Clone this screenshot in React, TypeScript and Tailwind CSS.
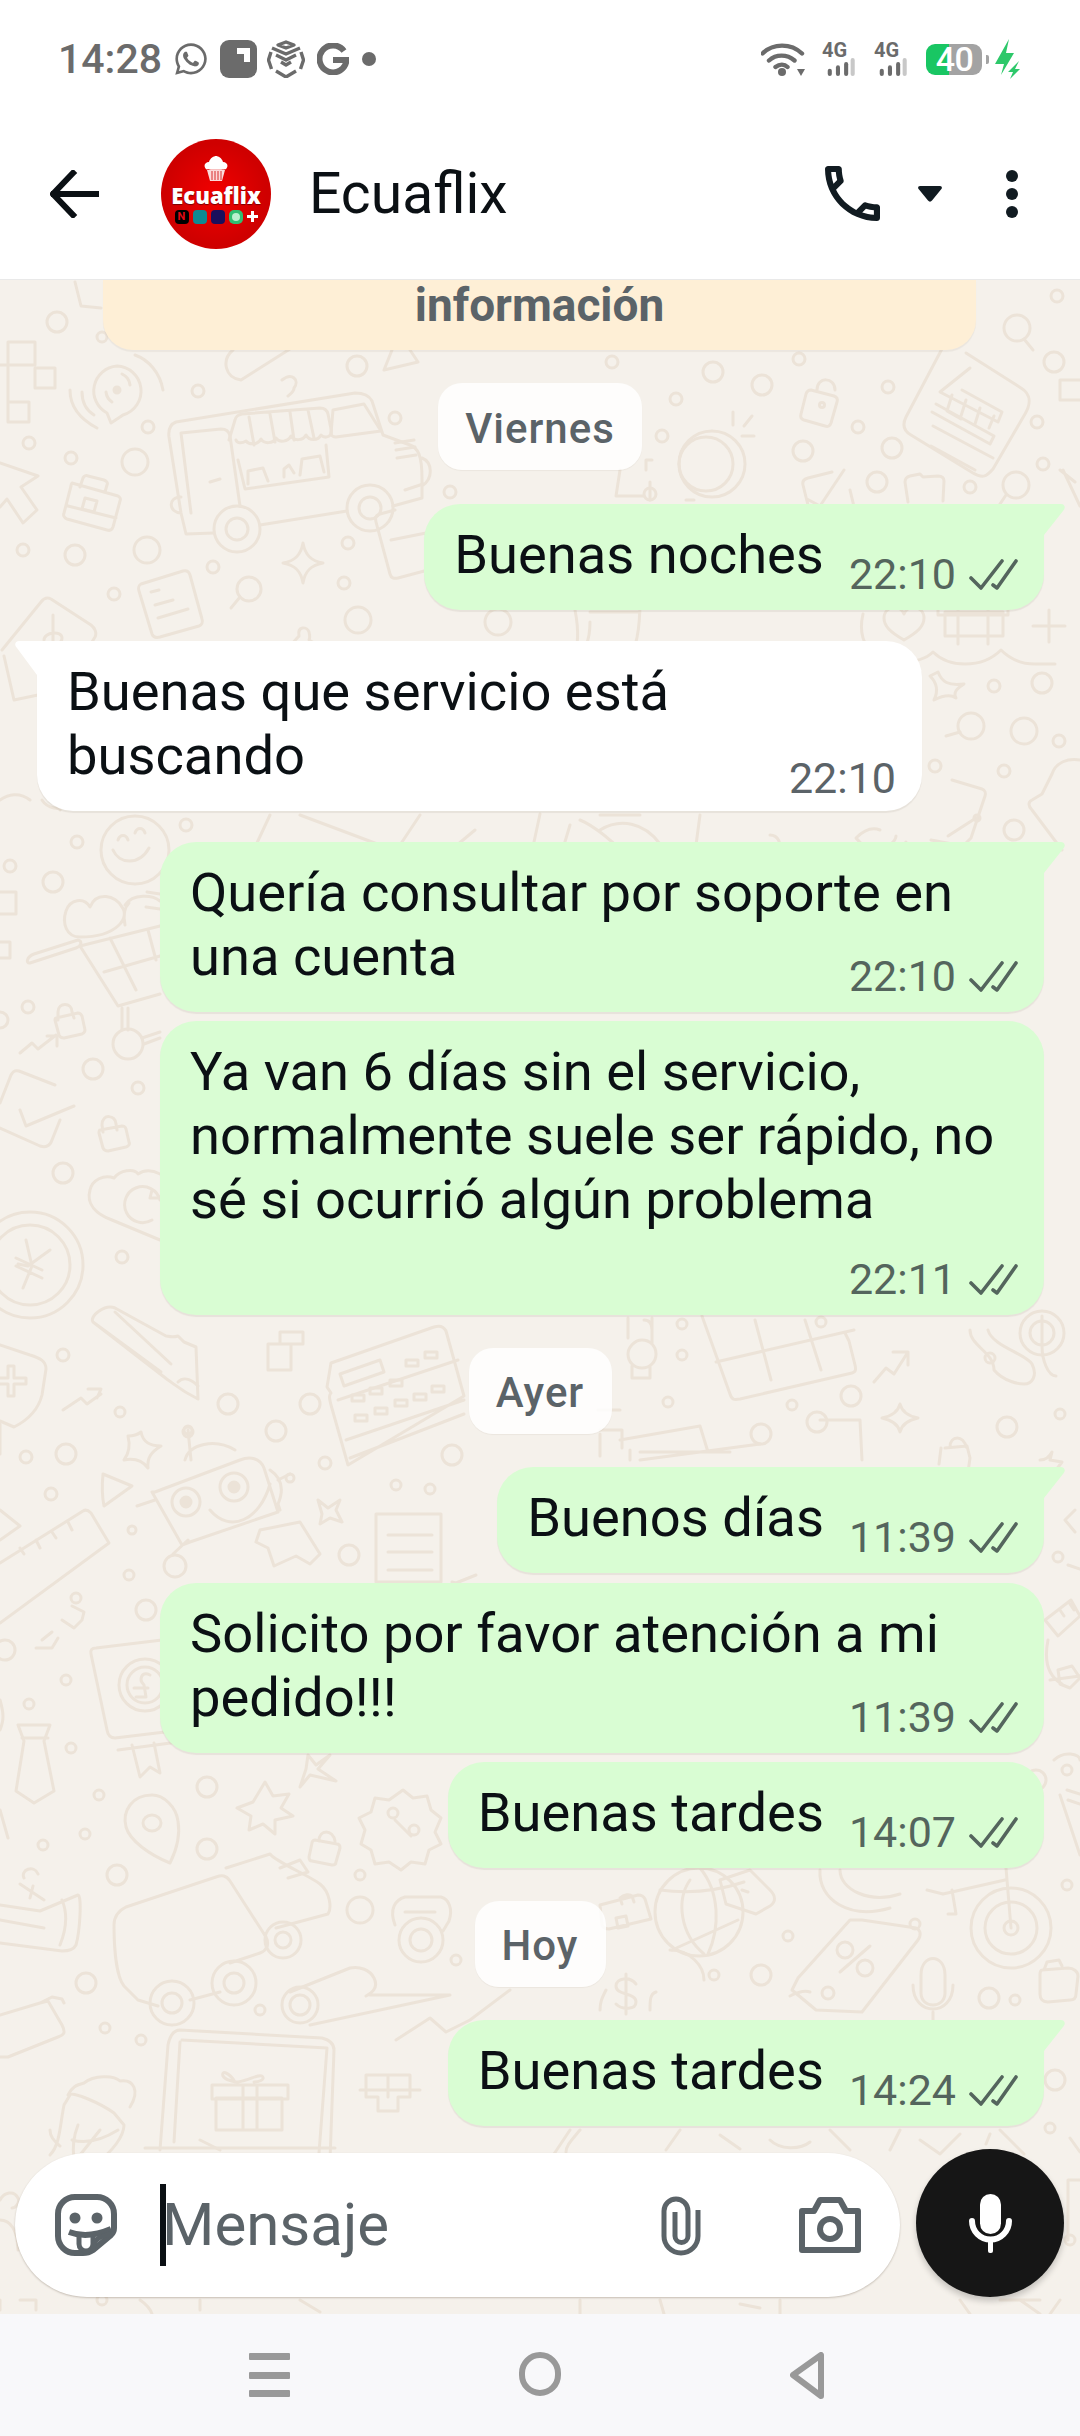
import React from "react";
import { FaWhatsapp } from "react-icons/fa";

const C = ({ x, y, r }: { x: number; y: number; r: number }) => <circle cx={x} cy={y} r={r} />;

const circles: [number, number, number][] = [
  [57,322,10],[102,337,5],[198,391,6],[357,366,10],[148,427,6],[29,443,6],[71,458,6],[135,462,13],[23,550,6],[75,555,10],[147,550,13],[213,567,6],[348,543,6],[344,583,6],[395,418,6],[450,492,6],[114,594,6],[358,620,13],[498,622,13],[77,842,6],[186,825,6],[10,866,6],
  [1057,296,6],[612,362,6],[713,372,10],[799,359,6],[762,385,10],[676,399,6],[888,387,6],[1054,362,10],[1037,422,6],[858,427,6],[662,436,6],[803,451,10],[892,448,10],[1043,464,6],[877,482,10],[970,487,6],[650,494,6],[994,686,6],[1042,683,10],[1024,731,13],[1059,741,6],[935,766,6],[1004,771,6],[1014,830,10],
  [53,882,10],[28,1007,6],[93,1069,10],[138,1088,6],[63,1173,10],[122,1257,6],
  [63,1355,6],[120,1412,5],[228,1404,10],[310,1404,10],[276,1431,10],[26,1457,6],[66,1454,10],[188,1432,5],[325,1463,6],[51,1494,6],[452,1455,10],[396,1485,5],[430,1489,5],[349,1555,10],[129,1575,5],[76,1598,5],[146,1610,10],[5,1650,10],[66,1680,5],[29,1704,5],[71,1748,5],[207,1787,10],[99,1795,5],[85,1834,5],[43,1845,5],[207,1849,10],[117,1875,10],[360,1875,5],[360,1910,13],[456,1960,5],[86,1983,10],[105,2028,5],[141,2040,5],[260,2010,5],
  [682,1324,5],[682,1355,5],[821,1322,5],[990,1358,5],[851,1396,10],[792,1405,5],[668,1402,5],[761,1434,10],[817,1422,10],[1007,1427,10],[1060,1414,5],[1058,1557,5],[1036,1780,10],[1067,1770,5],[1067,1885,5],[915,1924,5],[788,1936,5],[714,1975,5],[761,1975,10],[989,1998,10],[1015,2000,5],[1055,2080,10],[1050,2128,5],
];

function Wallpaper() {
  return (
    <svg className="absolute inset-0" width="1080" height="2034" viewBox="0 280 1080 2034" fill="none" stroke="#ece3d8" strokeWidth="3" strokeLinecap="round" strokeLinejoin="round">
      {circles.map(([x, y, r], i) => <C key={i} x={x} y={y} r={r} />)}
      <path d="M8 342h27v23h-27zM35 368h20v20h-20zM8 402h21v20h-21zM0 365h8v37M75 282l6 24 20 2" />
      <path d="M117 366a25 25 0 0 1 6 49l-12 8-4-10a25 25 0 0 1 10-47zM106 392a14 14 0 0 0 6 10M130 385a14 14 0 0 0-8-11M70 390c0 16 8 28 27 38M82 392c0 10 4 18 12 23M135 355c14 5 25 18 28 35" />
      <circle cx="117" cy="390" r="3" fill="#ece3d8" />
      <path d="M233 350c-12 10-8 28 8 30l60-38M282 380c10-8 18 0 12 8 0 4-4 6-6 8M392 350l-8 20 34-8-8-12" />
      <path d="M176 422L355 393c8 0 14 2 17 8l11 34 27 10c8 3 12 10 12 34v19l-29 8M347 511L260 525M214 533l-28 1-5-21-12-76c-1-8 2-13 7-15M422 458c10 4 12 20 0 28M181 513c-12 0-14-16 0-16" />
      <path d="M181 433l40-4c5 0 8 2 9 7l10 70M191 513l-10-80M210 482l10-3" />
      <path d="M229 440l6-20c1-4 3-5 7-6l78-6c4 0 7 2 8 6l3 15c2 8-6 10-10 6-3 6-12 6-15 0-3 6-12 6-15 1-3 6-12 7-15 2-3 6-12 6-15 1-3 6-12 6-15 2-5 3-9 2-10-1M249 417l5 28M270 414l5 28M290 412l4 28M308 410l6 28" />
      <path d="M333 410l31-6 17 27-45 6c-3 0-5-2-5-4zM238 460l7 29 84-12-3-32M248 484v-13l15-3 5 13M284 477v-8l5-4 5 8M300 475l2-16 18-3 4 16M395 443l19-3M396 450l19-3M397 458l19-3" />
      <circle cx="237" cy="529" r="23" /><circle cx="237" cy="529" r="11" /><circle cx="370" cy="508" r="23" /><circle cx="370" cy="508" r="11" />
      <path d="M0 463l38 13-17 11 16 23-14 13-16-24-7 8" />
      <path d="M72 483l46 13c2 1 3 3 2 5l-7 26c-1 3-3 4-6 3l-40-11c-3-1-4-4-3-6l7-27c0-2 1-3 1-3zM80 487l3-9c1-2 3-3 5-2l16 4c3 1 4 3 3 5l-2 7M68 506l48 12M85 498l12 3-3 11-12-3z" />
      <path d="M141 584l42-13c4-1 6 1 7 4l12 44c1 3 0 6-3 7l-39 11c-4 1-7 0-8-3l-13-43c-1-3 0-6 2-7zM151 592l8-2M155 605l18-5M158 618l30-9" />
      <path d="M303 543c2 12 8 18 20 20-12 2-18 8-20 20-2-12-8-18-20-20 12-2 18-8 20-20z" />
      <circle cx="249" cy="589" r="12" /><path d="M240 597l-9 11" />
      <path d="M290 646l9-10c-2-10 8-10 10-4 1 4 1 6 0 8l10 6-10 12-10 8" />
      <path d="M395 510l-15 4c-4 1-5 4-4 8l14 52c1 4 4 5 8 4l30-8M405 490l18-6M391 540l40-8" />
      <path d="M2 650l39-48c3-4 6-5 10-3l40 26c4 3 6 8 4 12l-6 10M4 656l10 44 24-5M53 615v40M44 640c0-8 18-10 18-2 0 10-18 6-18 16 0 8 18 6 18-2" />
      <path d="M42 800c5 8 18 12 26 4M40 780l20 30" />
      <circle cx="712" cy="464" r="33" /><circle cx="706" cy="464" r="27" /><path d="M733 412v13M752 416l-8 10M754 436h-12" />
      <path d="M646 470v-10h6M620 470l-4 26h28M694 500h-8M650 500v-18" />
      <path d="M811 390l23 6c3 1 4 3 3 6l-6 21c-1 3-3 4-6 3l-21-6c-3-1-4-3-3-6l5-20c1-3 3-4 5-4zM817 390c0-14 18-13 18 0" /><circle cx="822" cy="405" r="2.5" />
      <path d="M944 345l-38 72c-4 8-2 14 5 18l62 38c10 6 14 3 20-4l32-55c6-10 6-20-4-26l-55-35" />
      <path d="M970 368l-30 24 58 30 4-10-40-22M952 395l-5 16 14 8M966 400l-5 16M980 408l-5 16M994 416l-5 12M936 404l58 32-4 8-58-32M933 426l60 32M931 446l44 24" />
      <circle cx="1017" cy="328" r="13" /><path d="M1024 339l9 11" /><circle cx="1016" cy="485" r="13" /><path d="M1006 495l-8 12" />
      <path d="M1060 470l15 12M1063 470l17 36M1060 380h20M1060 380v20h20" />
      <path d="M832 472l-24 6c-4 1-6 3-5 7l8 32M844 470l-24 36-13-7M850 490l6 25" />
      <path d="M910 476l10-2 3 3 15-1c4 0 6 2 6 5l-1 20M910 476c-4 1-5 3-5 6l3 20" />
      <path d="M904 640c-14-8-20-14-20-22 0-12 16-14 20-4 4-10 20-8 20 4 0 8-6 14-20 22zM863 614c-6 26 6 48 38 48 14 0 26-4 32-10 6 6 16 12 32 12 20 0 30-8 36-14 6 6 16 14 34 14h20M938 615h70v-15c0-10-70-10-70 5v10zM958 600v44M988 600v44M945 612h58v24h-58zM1049 610v32M1033 626h32" />
      <path d="M590 622c0 20-6 30-14 40M640 600c0 30-4 50-12 60M575 610c4 20 4 36-2 52M590 612h50" />
      <path d="M938 672c4 10 10 14 26 12-10 6-10 10-8 14-6-4-14-2-22 2 4-8 4-16-4-24z" />
      <circle cx="971" cy="726" r="13" /><path d="M960 732l-14 4" />
      <path d="M952 780l30 9c3 1 4 4 3 7l-14 42-8 8-32-6M948 836l28-18" /><circle cx="977" cy="818" r="3" />
      <path d="M1080 760c-12-2-24 2-28 14l-10 20-10 6c-4 2-4 6 0 10l30 40" />
      <path d="M880 830c-10-4-18 2-24 8 6 8 16 14 22 12 8-2 18-8 18-14M890 850c10 0 14-4 16-8" />
      <path d="M770 835c8 0 12 8 10 20M580 820c10 4 40 24 46 40M570 825l-12 40" />
      <path d="M0 800c8-6 20-8 30 0M270 815l-14 30M300 815l80 30M420 815l-20 30M540 814l-6 28M475 830l-30 25M600 830c20-12 44-8 60 14M640 815h-40M700 815l-4 30" />
      <circle cx="135" cy="850" r="34" /><path d="M113 850c6 14 26 16 36-2M118 840c2-6 8-6 10 0M135 833c2-6 8-6 10 0" />
      <path d="M80 937c-14 0-18-14-14-26 4-12 18-14 24-4 6-16 26-12 32 0 8 10-4 30-42 30zM125 905c8-12 28-10 35-4M125 925c-2-10 0-18 4-22M147 892l13 2M146 907l14 2" />
      <path d="M30 963l46-15c6-2 6-7 2-8l-44 14c-8 3-8 10-4 9zM80 946l80-20M80 946l38 60 42-12M110 938l26 52M104 972l56-16M148 930l8 30M122 1008v22M128 1008v22" />
      <circle cx="128" cy="1044" r="15" /><path d="M142 1038l18-6M144 1044l16-6" />
      <path d="M58 1020v-8c0-10 14-10 14 0l2 6M56 1018l22-5c2 0 3 1 4 3l3 14c0 2-1 3-3 4l-18 4c-2 0-4 0-5-3l-4-15c0-1 0-2 1-2zM103 1132l-1-7c0-12 14-10 14-1l1 6M100 1130l22-4c2 0 3 0 4 3l3 13c1 2 0 4-3 5l-18 4c-3 0-4-1-5-3l-4-15c0-2 0-3 1-3z" />
      <path d="M20 1053l12-10 6 6 18-14M47 1036h10v10" />
      <path d="M55 1085l-36-14c-4-1-6 0-8 4l-11 28M20 1110l6 16 48-20M60 1120l-8 20c-2 6-6 8-12 6l-40-18" />
      <path d="M160 1240l-48-20c-16-6-26-16-22-30 2-10 14-16 24-12 6-8 20-10 24-4 6-4 14-4 22 0" /><path d="M160 1200a18 18 0 1 0 -8 20M152 1190l-2 8 10 0" />
      <circle cx="30" cy="1265" r="53" /><circle cx="30" cy="1265" r="40" /><path d="M26 1240l6 26-9 22M50 1250l-22 16-10-2M16 1258l26 12M16 1266l26 12" />
      <circle cx="0" cy="1020" r="8" /><path d="M0 892h16v22H0M0 942h10v16H0" />
      <path d="M93 1322l75 58c6 4 12 10 30 19l-2-52-12-5-6-6c-6 2-10 0-12 0L115 1308c-10-4-26 8-22 14zM115 1312l56 52M93 1322l68 50M178 1382c6-6 14-2 20 4" />
      <path d="M0 1345l30 10c10 3 16 6 16 14l-4 26c-4 16-16 26-28 32l-14-6M-2 1378h10v-12h6v12h12v6H14v12H8v-12H0" />
      <path d="M63 1410l18-12 6 6 14-10M88 1389h13l-4 9" />
      <path d="M268 1370h23v-26h12v-12h-23v12h-12zM280 1344h11" />
      <path d="M331 1363l103-36c6-2 10 0 12 4l18 65-116 69-17-60c-2-8-2-10 0-12l-4-6zM340 1374l40-14 4 12-40 14zM338 1400l120-40M350 1458l114-44M346 1440l118-40" />
      <path d="M352 1395h12v6h-12zM370 1388h12v6h-12zM390 1380h12v6h-12zM406 1360h12v6h-12zM425 1352h12v6h-12zM355 1415h12v6h-12zM375 1408h12v6h-12zM395 1400h12v6h-12zM414 1394h12v6h-12zM432 1386h12v6h-12z" />
      <path d="M185 1460c4-16 30-22 50-10M155 1492l85-32c10-4 20-2 24 8l14 44-88 30-8 3-30-53zM188 1540l-15 14M155 1500l-18 6M188 1430l3 30M270 1470c12 8 14 20 8 34l2 6M278 1480l12-6M210 1510c20 24 50 10 60-26" />
      <circle cx="186" cy="1502" r="14" /><circle cx="234" cy="1487" r="14" /><circle cx="186" cy="1502" r="5" fill="#ece3d8" /><circle cx="234" cy="1487" r="5" fill="#ece3d8" />
      <circle cx="175" cy="1566" r="11" /><circle cx="290" cy="1478" r="4" /><circle cx="132" cy="1530" r="4" /><circle cx="188" cy="1430" r="4" />
      <path d="M141 1432c2 10 8 14 20 14-10 6-14 12-13 22-6-8-14-10-24-8 6-8 6-16 4-24 4 0 8 0 13-4zM103 1474l29 12-28 20c-2-10-2-22-1-32z" />
      <path d="M260 1530l40-8 20 32-10 10-14-8-22 10-6-18-12-6zM318 1500l10 8 12-8-4 10 6 12-12-4-10 6 2-10z" />
      <path d="M0 1563l83-52c3-2 6 0 8 2l18 30-109 80M20 1548l4 6M36 1540l4 8M52 1532l4 6M68 1522l4 8" />
      <path d="M0 1510l20 16-20 14M376 1514h65v68h-65zM388 1535h44M388 1552h44M388 1570h44M0 1424v30" />
      <path d="M476 1575l-20 8-4-1M458 1650h8" />
      <path d="M62 1620l12 8 8-8 2-8-12-6M42 1640l10-8M36 1648h16l6-10" />
      <path d="M162 1640l-66 8c-4 0-6 2-5 6l16 76c1 6 4 8 8 8l50-6" /><circle cx="145" cy="1685" r="18" /><circle cx="145" cy="1685" r="26" /><path d="M150 1675c-8-4-12 4-6 10l2 12h-10M134 1688h14M118 1750l60-8M132 1745l8 32 10-10 10 6-6-30" />
      <path d="M18 1725h32l-6 16 10 50-20 12-18-12 8-50z" /><path d="M22 1738h26" />
      <path d="M0 1700c4 14 4 20 0 30M0 1810l8 28" />
      <path d="M152 1795c-20 0-30 16-26 32 4 14 24 28 44 36 8-16 10-30 8-42-2-14-14-26-26-26z" /><ellipse cx="152" cy="1823" rx="9" ry="8" />
      <path d="M265 1782l8 14 16-2-8 14 12 8-18 4 0 14-12-10-14 6 2-14-14-8 16-6z" />
      <path d="M403 1790l10 8 14-2 4 14 10 8-6 14 6 12-12 6-4 14-14-2-10 8-12-8-14 2-4-14-10-6 4-14-6-12 12-6 4-14 14 2zM395 1820l16 16" /><circle cx="393" cy="1813" r="5" /><circle cx="414" cy="1830" r="5" />
      <path d="M315 1840l22 4c2 0 3 2 3 4l-4 14c0 2-2 3-4 3l-20-4c-2 0-3-2-3-4l3-14c0-2 2-3 3-3zM319 1841c0-12 14-12 16 0" />
      <path d="M308 1755l8 10 14-10-12 14 18 12-26-6-10 12 6-18z" />
      <path d="M0 1905l40 6 38-16c4 0 2 36-2 50-2 4-8 6-14 6l-62-8M20 1884l24 16M24 1878c-4-8 10-14 14-4M33 1886l-3 12M0 1920l44 8M62 1900c6 14 4 30-2 45" />
      <path d="M114 1925c0-8 4-14 12-18l90-30c6-2 10-2 14 4l36 56c4 8 0 14-6 16l-30 10M226 1868l44-14c6 8 40 22 50 30 10 8 12 24 8 30l-52 14M280 1868l20-8 8 12-20 6M138 2000l-14-14c-8-10-10-40-10-61M138 2000l20 6M190 2000l30-8" />
      <circle cx="172" cy="2003" r="22" /><circle cx="172" cy="2003" r="10" /><circle cx="234" cy="1983" r="22" /><circle cx="234" cy="1983" r="10" /><circle cx="283" cy="1940" r="18" /><circle cx="283" cy="1940" r="8" />
      <circle cx="421" cy="1940" r="22" /><circle cx="421" cy="1940" r="11" /><path d="M395 1925c-6-16 0-25 10-28l36 0c8 2 12 12 8 24l-6 10M405 1912h30" />
      <circle cx="300" cy="2005" r="18" /><circle cx="300" cy="2005" r="10" /><path d="M290 1992l60-24c10-2 20 2 24 10 4 8 0 14-8 18M310 2025l140-30h-80M396 2040l34-22 16 14 24-12 40-30" />
      <path d="M160 2150l8-105c2-10 6-15 12-15l142 8c8 2 12 6 12 12l-4 110M182 2040l145 8-8 105M180 2042l-6 100M145 2148h190" />
      <path d="M212 2085h76v14h-76zM216 2098v32h66v-32zM243 2085v44M257 2085v44M235 2082c-6-10-14-12-12-6 2 4 12 6 15 6 12-2 20-8 24-6 4 4-4 6-8 6" />
      <path d="M382 2075h28v22h-12v14h-20v-14h-12v-22zM388 2075v22M360 2090h60" />
      <path d="M50 2155c10-10 10-30 14-50l6-10c2-4 30 8 44 18l10 12c0 10-10 26-30 40l-40 4M68 2095c4-8 8-10 16-12 10-8 30-8 36-2 14-2 20 10 10 26M78 2125c-4 10-6 20-4 34M100 2130l-24 30M72 2140c14 4 30 0 46-10" />
      <path d="M0 2200c4-8 14-10 18-2 2 4-2 10-6 10" />
      <path d="M0 2015l40-12 8-2 14 24c4 8 2 10-4 12l-50 20H0M40 2003l12-6 10 2 2 4" />
      <path d="M702 1316l28 78c2 6 4 6 10 5l112-26c4-1 4-4 3-8l-6-24-4-8M716 1362l138-32M755 1320l16 60M805 1320l16 50" />
      <path d="M644 1320c6 0 8 4 8 10v14M642 1340c-8 0-14 8-14 14 0 8 6 14 14 14 8 0 14-6 14-14 0-8-6-14-14-14zM632 1366v12h18v-12M628 1318v20M652 1318v20" />
      <path d="M874 1382l12-14 8 6 14-22M893 1352h15v13M970 1330c0 16 24 22 24 40 10 12 26 14 30 14 8 0 14-8 8-20-6-10-40-18-44-34M1042 1316v30c0 14 6 30 14 30" />
      <circle cx="1042" cy="1333" r="22" /><circle cx="1042" cy="1333" r="12" />
      <path d="M900 1404c2 8 8 12 18 14-10 2-16 6-18 14-2-8-8-12-18-14 10-2 16-6 18-14z" />
      <path d="M945 1448l22-2 3 12-2 14M950 1447c0-12 14-12 16 0M941 1448l-2 16M1040 1460c6 0 10-4 12-8l-2 8 12 2-6 8" />
      <path d="M600 1430h22v18M620 1410h-22M600 1434v22M620 1440l80-14 8 26M640 1460l120-16M640 1452h90M630 1450v10" />
      <path d="M820 1420h40l2 40M1075 1510l-10 10 10 12M1068 1565l12 4M1045 1620l26-20 9 16-22 20-13-16M1060 1610l4 6M1070 1604l4 6" />
      <path d="M1058 1670l14-4 8 12-10 10-10-4zM1050 1680l30-4M1048 1640c-4 20 0 36 14 44M1054 1760c10-10 26-6 26 0M1068 1800l12 4M1060 1795l20 60M1067 1790l13 4" />
      <path d="M720 1880l30-10 20 20c6 6 6 12 0 16l-14 8-30-10zM742 1890l6 2" />
      <circle cx="699" cy="1912" r="44" /><path d="M660 1890c30 4 60 0 84 -8M672 1950l66-30M700 1868c20 24 20 60 8 86M690 1880c-14 20-10 54 14 74" />
      <path d="M840 1870c0 20 30 34 60 24M820 1870c-2 30 30 50 70 38" />
      <circle cx="1011" cy="1928" r="40" /><circle cx="1011" cy="1928" r="26" /><circle cx="1011" cy="1928" r="7" /><path d="M1011 1928l-5-60M1005 1880l-62 14-16-4M952 1890l4 24h-8" />
      <path d="M850 1920l-52 58-6 12 24 20 46 2 56-72c4-6 2-10-2-12l-54-8z" /><circle cx="845" cy="1950" r="8" /><circle cx="865" cy="1968" r="8" /><path d="M840 1972l30-26M790 1996c8-4 14-6 20-4" /><circle cx="828" cy="1993" r="6" />
      <path d="M921 1975c0-22 24-22 24 0v18c0 16-24 16-24 0zM913 1985c0 32 40 32 40 0M933 2012v12M670 1950c20 0 34 16 34 30M650 2010c0-10 0-16 6-18M600 2010c0-8 2-12 6-20" />
      <path d="M626 1974v40M636 1984c-6-8-20-6-20 2 0 10 20 6 20 16 0 8-14 8-20 2" />
      <path d="M600 1905l38-10c4 0 6 2 7 4l6 20-42 10c-4 0-6-2-7-4zM622 1904l-2-6c4-4 10-4 12-2l2 6M616 1918l10-2 2 10-10 2z" />
      <path d="M1042 1970l26-2c6 0 10 4 10 8l-2 18c0 4-2 6-6 6l-22 2c-6 0-8-4-8-8v-20c0-2 1-4 2-4zM1044 1970l3-8 12-2 3 6" />
      <path d="M570 2130l-16 24M580 2130c-10 12-14 16-14 22M680 2130l-14 20M720 2135l20 14M770 2140c10 10 30 10 40 2M830 2130l20 20M900 2130l-10 20M920 2140l20 14 20-20M990 2134l-4 10M1000 2130l24 24" />
      <path d="M0 2300v10M50 2130c0 8 6 12 10 16M200 2140l20 10M1000 2300h40M20 2300h16v10M140 2300c6 4 10 8 12 14M200 2300v10M300 2300l20 12M580 2300v14M660 2300l4 14M1020 2300l20 14M1060 2300l-10 14M960 2300l10 14M780 2300v14M740 2304l20 4" />
      <circle cx="102" cy="2300" r="5" /><circle cx="300" cy="2330" r="5" /><circle cx="1070" cy="2240" r="5" />
      <path d="M1068 2180h12M1068 2180v60M0 2220c10 0 18 10 18 30M1070 2138l10 14" />
    </svg>
  );
}

function Ticks() {
  return (
    <svg width="49" height="31" viewBox="0 0 49 31" fill="none" stroke="#54655d" strokeWidth="3.6" strokeLinecap="round" strokeLinejoin="round" className="shrink-0">
      <path d="M2 19L12 29L33 2" />
      <path d="M24 26L28 29L47 2" />
    </svg>
  );
}

function Time({ t, out }: { t: string; out: boolean }) {
  return (
    <div className="flex items-center gap-[13px] h-[48px] shrink-0">
      <span className={`text-[43px] leading-[48px] ${out ? "text-[#54655d]" : "text-[#5b6368] -mb-[6px]"}`}>{t}</span>
      {out && <Ticks />}
    </div>
  );
}

function Msg({ out = true, tail = false, lines, time, mode = "row", className = "" }: { out?: boolean; tail?: boolean; lines: string[]; time: string; mode?: "row" | "over" | "below"; className?: string }) {
  const corners = tail ? (out ? "rounded-[36px] rounded-tr-none" : "rounded-[36px] rounded-tl-none") : "rounded-[36px]";
  const bg = out ? "bg-[#d9fdd3]" : "bg-white";
  const text = (
    <div className={`text-[54.3px] leading-[64px] text-[#0b1014] ${mode === "below" ? "" : "pb-[11px]"}`}>
      {lines.map((l) => <div key={l} className="whitespace-nowrap">{l}</div>)}
    </div>
  );
  return (
    <div className={`relative ${bg} ${corners} pl-[30px] pr-[26px] pt-[19px] pb-[12px] shadow-[0_2px_1px_rgba(60,40,20,0.07)] ${out ? "self-end" : "self-start"} ${className}`}>
      {tail && out && (
        <svg className="absolute left-full top-0" width="22" height="31" viewBox="0 0 22 31" fill="#d9fdd3"><path d="M0 0H17C21 0 22 4 19 7L0 31Z" /></svg>
      )}
      {tail && !out && (
        <svg className="absolute right-full top-0" width="23" height="34" viewBox="0 0 23 34" fill="#ffffff"><path d="M23 0H5C1 0 0 4 3 7L23 34Z" /></svg>
      )}
      {mode === "row" ? (
        <div className="flex items-end gap-[25px]">{text}<Time t={time} out={out} /></div>
      ) : (
        <>
          {text}
          <div className={`flex justify-end ${mode === "over" ? "-mt-[48px]" : "mt-[23px]"}`}><Time t={time} out={out} /></div>
        </>
      )}
    </div>
  );
}

function DateChip({ label, w, h, className = "" }: { label: string; w: string; h: string; className?: string }) {
  return (
    <div className={`self-center ${w} ${h} pt-[3px] rounded-[24px] bg-white/85 flex items-center justify-center text-[42px] font-medium tracking-[1px] text-[#5b6368] shadow-[0_1px_1px_rgba(60,40,20,0.05)] ${className}`}>
      {label}
    </div>
  );
}

function Avatar() {
  return (
    <div className="w-[110px] h-[110px] rounded-full bg-[radial-gradient(circle,#f20000_0%,#cf0000_65%)] flex flex-col items-center shrink-0 pt-[17px]">
      <svg width="24" height="25" viewBox="0 0 24 25" fill="#ffffff">
        <path d="M2 13c-3-3-1-7 3-7 1-4 5-6 7-6s6 2 7 6c4 0 6 4 3 7-1 1-19 1-20 0z" />
        <path d="M3 14h18l-3 11H6z" fillOpacity="0.85" />
        <path d="M8 15v9M11 15v9M14 15v9M17 15v9" stroke="#d00000" strokeWidth="0.8" />
      </svg>
      <div className="font-['Open_Sans',sans-serif] font-extrabold text-[22px] leading-[26px] text-white mt-[1px] [text-shadow:0_1px_1px_#700]">Ecuaflix</div>
      <div className="flex items-center gap-[4px] mt-[2px]">
        <div className="w-[14px] h-[14px] rounded-[4px] bg-black flex items-center justify-center text-[11px] leading-none font-bold text-[#e50914]">N</div>
        <div className="w-[14px] h-[14px] rounded-[4px] bg-[#0d8a93]" />
        <div className="w-[14px] h-[14px] rounded-[4px] bg-[#1a0f5c]" />
        <div className="w-[14px] h-[14px] rounded-[5px] bg-[#2fbf71] flex items-center justify-center"><div className="w-[8px] h-[8px] rounded-full bg-[#b9f0cf]" /></div>
        <svg width="11" height="11" viewBox="0 0 11 11" fill="#ffffff"><path d="M4 0h3v4h4v3H7v4H4V7H0V4h4z" /></svg>
      </div>
    </div>
  );
}

function StatusBar() {
  const gray = "#6b6b6b";
  const Cell = () => (
    <div className="w-[36px] h-[34px] flex flex-col">
      <div className="text-[20px] leading-[17px] font-bold text-[#6b6b6b]">4G</div>
      <svg width="36" height="22" viewBox="0 0 36 22" className="-mt-[1px]">
        <rect x="3" y="13" width="5" height="9" rx="2.5" fill={gray} />
        <rect x="13" y="9" width="5" height="13" rx="2.5" fill={gray} />
        <rect x="23" y="5" width="5" height="17" rx="2.5" fill={gray} />
        <rect x="31" y="0" width="5" height="22" rx="2.5" fill="#c8c8c8" />
      </svg>
    </div>
  );
  return (
    <div className="h-[118px] flex items-center pl-[58px] pr-[60px] text-[#6b6b6b]">
      <span className="text-[41px] leading-none font-medium">14:28</span>
      <FaWhatsapp className="ml-[11px]" size={36} color={gray} />
      <svg className="ml-[11px]" width="37" height="38" viewBox="0 0 37 38"><rect width="37" height="38" rx="9" fill={gray} /><path d="M17 8h13v14h-6v-8h-7z" fill="#ffffff" /></svg>
      <svg className="ml-[10px]" width="38" height="38" viewBox="0 0 38 38" fill="none" stroke={gray} strokeWidth="3.4" strokeLinejoin="round">
        <path d="M19 2l-8 3 8 3 8-3zM5 8l14 6 14-6M9 15l10 5 10-5M14 22l5 3 5-3" />
        <path d="M4 12L1.5 20l3 9M34 12l2.5 8-3 9M9 31l10 6 10-6" />
      </svg>
      <svg className="ml-[12px]" width="32" height="32" viewBox="0 0 32 32" fill="none"><path d="M27 8A13.5 13.5 0 1 0 29.5 17H16" stroke={gray} strokeWidth="6" /></svg>
      <div className="ml-[13px] w-[14px] h-[14px] rounded-full bg-[#6b6b6b]" />
      <div className="flex-1" />
      <svg width="44" height="34" viewBox="0 0 44 34" fill="none" stroke={gray} strokeWidth="4.4" strokeLinecap="round">
        <path d="M1.5 11.5C12 1 30 1 41 11.5M8 18.5C15 12 26 12 33.5 18.5M14.5 25c4-3 9-3 12 0" />
        <circle cx="21" cy="30" r="4" fill={gray} stroke="none" />
        <path d="M36 27h8l-4 7z" fill={gray} stroke="none" />
      </svg>
      <div className="ml-[17px]"><Cell /></div>
      <div className="ml-[16px]"><Cell /></div>
      <div className="ml-[16px] w-[56px] h-[31px] rounded-[9px] bg-[linear-gradient(to_right,#19c663_0%,#19c663_41%,#a3a3a3_41%,#a3a3a3_100%)] flex items-center justify-center text-white text-[34px] font-medium leading-none">
        <span className="pl-[1px] tracking-[-0.5px]">40</span>
      </div>
      <div className="ml-[4px] w-[3px] h-[9px] rounded-r-[2px] bg-[#a3a3a3]" />
      <svg className="ml-[6px]" width="25" height="40" viewBox="0 0 25 40" fill="#2dc86a"><path d="M14 0L0 25H9L6 36L19 14H11Z" /><path d="M24 22L13 33H18L15 40L25 30H20Z" /></svg>
    </div>
  );
}

function Toolbar() {
  return (
    <div className="h-[162px] flex items-center pb-[10px] border-b border-[#e9e9e9] text-[#0b1014]">
      <svg className="ml-[50px]" width="49" height="48" viewBox="0 0 49 48" fill="none" stroke="#0b1014" strokeWidth="6" strokeLinecap="square">
        <path d="M47 24H4M23 3L3 24L23 45" />
      </svg>
      <div className="ml-[62px]"><Avatar /></div>
      <div className="ml-[38px] text-[57px] leading-none flex-1 -mt-[1px]">Ecuaflix</div>
      <svg width="55" height="55" viewBox="3 3 18 18" fill="#111b21"><path d="M6.54 5c.06.89.21 1.76.45 2.59l-1.2 1.2c-.41-1.2-.67-2.47-.76-3.79h1.51m9.86 12.02c.85.24 1.72.39 2.6.45v1.49c-1.32-.09-2.59-.35-3.8-.75l1.2-1.19M7.5 3H4c-.55 0-1 .45-1 1 0 9.39 7.61 17 17 17 .55 0 1-.45 1-1v-3.49c0-.55-.45-1-1-1-1.24 0-2.45-.2-3.57-.57-.1-.04-.21-.05-.31-.05-.26 0-.51.1-.71.29l-2.2 2.2c-2.83-1.45-5.15-3.76-6.59-6.59l2.2-2.2c.28-.28.36-.67.25-1.02C8.7 6.45 8.5 5.25 8.5 4c0-.55-.45-1-1-1z" /></svg>
      <svg className="ml-[38px]" width="24" height="16" viewBox="0 0 24 16" fill="#111b21"><path d="M2 0H22C24 0 24.500 2 23 3.500L14 14.500C13 16 11 16 10 14.500L1 3.500C-.5 2 0 0 2 0Z" /></svg>
      <div className="ml-[64px] mr-[62px] flex flex-col gap-[6px]">
        <div className="w-[12px] h-[12px] rounded-full bg-[#111b21]" />
        <div className="w-[12px] h-[12px] rounded-full bg-[#111b21]" />
        <div className="w-[12px] h-[12px] rounded-full bg-[#111b21]" />
      </div>
    </div>
  );
}

function Composer() {
  const ic = "#5b6368";
  return (
    <div className="mb-[17px] flex items-end pl-[15px] gap-[16px]">
      <div className="w-[885px] h-[144px] rounded-[72px] bg-white shadow-[0_1px_2px_rgba(60,40,20,0.25)] flex items-center">
        <svg className="ml-[40px] shrink-0" width="62" height="62" viewBox="0 0 62 62" fill="none" stroke={ic}>
          <path d="M20 3H42A17 17 0 0 1 59 20V34C59 37 58 39 56 41L38 56C35 58 32 59 28 59H20A17 17 0 0 1 3 42V20A17 17 0 0 1 20 3Z" strokeWidth="6" />
          <circle cx="20" cy="24" r="5.500" fill={ic} stroke="none" /><circle cx="42" cy="24" r="5.500" fill={ic} stroke="none" />
          <path d="M14 38C27 43 42 41 56 35" strokeWidth="6" />
          <path d="M24 42V50A7 7 0 0 0 38 50V42" strokeWidth="5" />
          <path d="M38 56C38 46 44 42 56 40" strokeWidth="5" />
        </svg>
        <div className="ml-[43px] w-[6px] h-[82px] bg-[#0b1014] shrink-0" />
        <div className="text-[60px] leading-none text-[#5b6368] flex-1 -ml-[4px]">Mensaje</div>
        <svg className="shrink-0" width="40" height="62" viewBox="0 0 40 62" fill="none" stroke={ic} strokeWidth="5">
          <path d="M37 16V42A17 17 0 0 1 3 42V17A12 12 0 0 1 27 17V42A6.500 6.500 0 0 1 14 42V18" />
        </svg>
        <svg className="ml-[98px] mr-[39px] shrink-0" width="62" height="56" viewBox="0 0 62 56" fill="none" stroke={ic} strokeWidth="6" strokeLinejoin="round">
          <path d="M3 14H15L21 3H41L47 14H59V53H3Z" />
          <circle cx="31" cy="32" r="10" />
        </svg>
      </div>
      <div className="w-[148px] h-[148px] rounded-full bg-[#161616] flex items-center justify-center shadow-[0_4px_6px_rgba(0,0,0,0.2)] shrink-0">
        <svg width="43" height="59" viewBox="0 0 43 59" fill="none">
          <rect x="11" y="0" width="21" height="40" rx="10.500" fill="#ffffff" />
          <path d="M3 27A18.500 18.500 0 0 0 40 27" stroke="#ffffff" strokeWidth="6" strokeLinecap="round" />
          <rect x="19" y="44" width="5" height="15" rx="2" fill="#ffffff" />
        </svg>
      </div>
    </div>
  );
}

function NavBar() {
  return (
    <div className="h-[122px] bg-[#f8f8fa] flex justify-center items-start pt-[38px] pr-[6px] gap-[229px]">
      <div className="w-[41px] h-[45px] flex flex-col justify-between pt-[1px]">
        <div className="h-[7px] bg-[#999999] rounded-[1px]" />
        <div className="h-[7px] bg-[#999999] rounded-[1px]" />
        <div className="h-[7px] bg-[#999999] rounded-[1px]" />
      </div>
      <div className="w-[42px] h-[44px] rounded-full border-[6px] border-[#999999]" />
      <svg width="35" height="47" viewBox="0 0 35 47" fill="none" stroke="#999999" strokeWidth="6" strokeLinejoin="round"><path d="M31 3V44L3 23Z" /></svg>
    </div>
  );
}

export default function App() {
  return (
    <div className="w-[1080px] h-[2436px] flex flex-col overflow-hidden bg-white font-['Roboto',sans-serif]">
      <StatusBar />
      <Toolbar />
      <div className="relative h-[2034px] bg-[#f5f1eb] flex flex-col">
        <Wallpaper />
        <div className="relative flex flex-col flex-1 pr-[36px]">
          <div className="ml-[103px] w-[873px] h-[70px] pb-[20px] bg-[#feefd6] rounded-b-[30px] flex items-center justify-center text-[46px] leading-[46px] font-bold text-[#5b6368] shadow-[0_2px_1px_rgba(60,40,20,0.05)]">información</div>
          <DateChip label="Viernes" w="w-[204px]" h="h-[87px]" className="mt-[33px] ml-[36px]" />
          <Msg className="mt-[34px]" tail lines={["Buenas noches"]} time="22:10" />
          <Msg className="mt-[31px] ml-[37px] w-[885px]" out={false} tail lines={["Buenas que servicio está", "buscando"]} time="22:10" mode="over" />
          <Msg className="mt-[31px] w-[884px]" tail lines={["Quería consultar por soporte en", "una cuenta"]} time="22:10" mode="over" />
          <Msg className="mt-[9px] w-[884px]" lines={["Ya van 6 días sin el servicio,", "normalmente suele ser rápido, no", "sé si ocurrió algún problema"]} time="22:11" mode="below" />
          <DateChip label="Ayer" w="w-[143px]" h="h-[86px]" className="mt-[33px] ml-[36px]" />
          <Msg className="mt-[33px]" tail lines={["Buenos días"]} time="11:39" />
          <Msg className="mt-[10px] w-[884px]" lines={["Solicito por favor atención a mi", "pedido!!!"]} time="11:39" mode="over" />
          <Msg className="mt-[9px]" lines={["Buenas tardes"]} time="14:07" />
          <DateChip label="Hoy" w="w-[131px]" h="h-[86px]" className="mt-[33px] ml-[36px]" />
          <Msg className="mt-[33px]" tail lines={["Buenas tardes"]} time="14:24" />
          <div className="mt-auto -mr-[36px]"><Composer /></div>
        </div>
      </div>
      <NavBar />
    </div>
  );
}
